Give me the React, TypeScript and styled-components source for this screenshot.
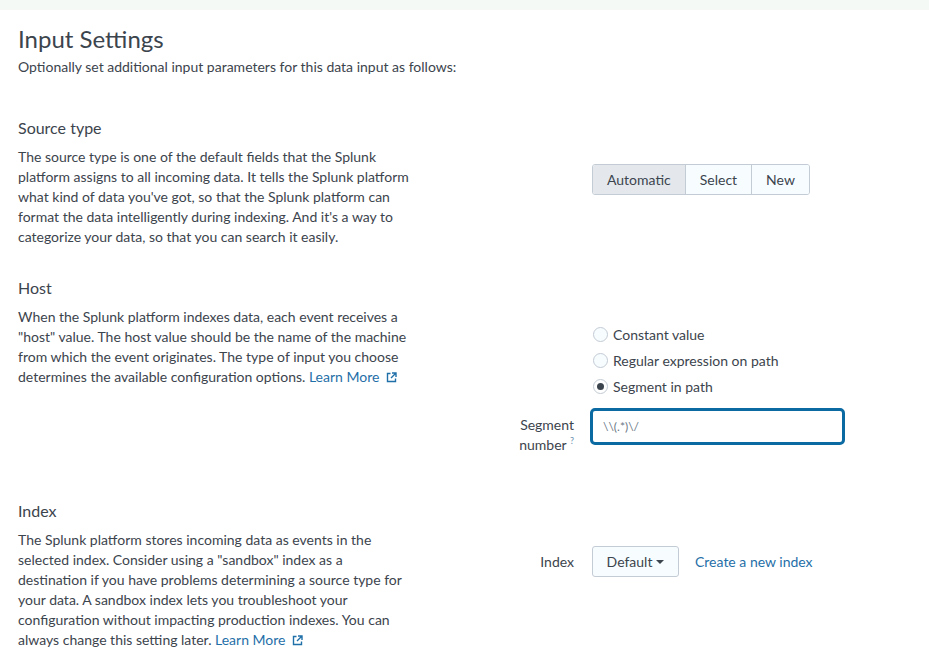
import React from "react";
import styled, { createGlobalStyle } from "styled-components";

const GlobalStyle = createGlobalStyle`
  html, body {
    margin: 0;
    padding: 0;
    background: #fff;
  }
  body {
    font-family: Lato, "Open Sans", sans-serif;
    color: #3c444d;
  }
`;

function ExternalIcon() {
  return (
    <svg width="11" height="11" viewBox="0 0 11 11" fill="none">
      <path d="M4.5 1.5H1.5v8h8v-3" stroke="#1f6fa8" strokeWidth="1.4" />
      <path d="M6 1h4v4M10 1L5 6" stroke="#1f6fa8" strokeWidth="1.4" />
    </svg>
  );
}

function App() {
  return (
    <Page>
      <GlobalStyle />
      <TopStrip />
      <Content>
        <Title>Input Settings</Title>
        <Subtitle>
          Optionally set additional input parameters for this data input as
          follows:
        </Subtitle>

        <Section>
          <Info>
            <Heading>Source type</Heading>
            <Text>
              The source type is one of the default fields that the Splunk
              platform assigns to all incoming data. It tells the Splunk
              platform what kind of data you've got, so that the Splunk
              platform can format the data intelligently during indexing. And
              it's a way to categorize your data, so that you can search it
              easily.
            </Text>
          </Info>
          <Controls $top={46}>
            <ControlRow>
              <span />
              <BtnGroup>
                <GroupBtn $active>Automatic</GroupBtn>
                <GroupBtn>Select</GroupBtn>
                <GroupBtn>New</GroupBtn>
              </BtnGroup>
            </ControlRow>
          </Controls>
        </Section>

        <Section>
          <Info>
            <Heading>Host</Heading>
            <Text>
              When the Splunk platform indexes data, each event receives a
              "host" value. The host value should be the name of the machine
              from which the event originates. The type of input you choose
              determines the available configuration options.{" "}
              <Link>
                Learn More <ExternalIcon />
              </Link>
            </Text>
          </Info>
          <Controls $top={43}>
            <ControlRow>
              <span />
              <RadioList>
                <RadioRow>
                  <Radio />
                  Constant value
                </RadioRow>
                <RadioRow>
                  <Radio />
                  Regular expression on path
                </RadioRow>
                <RadioRow>
                  <Radio $checked />
                  Segment in path
                </RadioRow>
              </RadioList>
            </ControlRow>
            <ControlRow $gap={9} $bottom={15}>
              <FieldLabel>
                Segment
                <br />
                number <Help>?</Help>
              </FieldLabel>
              <TextInput defaultValue={"\\\\(.*)\\/"} />
            </ControlRow>
          </Controls>
        </Section>

        <Section>
          <Info>
            <Heading>Index</Heading>
            <Text>
              The Splunk platform stores incoming data as events in the
              selected index. Consider using a "sandbox" index as a
              destination if you have problems determining a source type for
              your data. A sandbox index lets you troubleshoot your
              configuration without impacting production indexes. You can
              always change this setting later.{" "}
              <Link>
                Learn More <ExternalIcon />
              </Link>
            </Text>
          </Info>
          <Controls $top={45}>
            <ControlRow $center>
              <FieldLabel $center>Index</FieldLabel>
              <Inline>
                <Dropdown>
                  Default <Caret />
                </Dropdown>
                <Link>Create a new index</Link>
              </Inline>
            </ControlRow>
          </Controls>
        </Section>
      </Content>
    </Page>
  );
}

export default App;

const Page = styled.div`
  width: 929px;
  min-height: 671px;
  background: #fff;
`;

const TopStrip = styled.div`
  height: 10px;
  background: #f5f9f6;
`;

const Content = styled.div`
  padding: 0 18px;
`;

const Title = styled.h1`
  margin: 14px 0 0;
  font-size: 24px;
  line-height: 30px;
  font-weight: 400;
  color: #3c444d;
`;

const Subtitle = styled.p`
  margin: 3px 0 0;
  font-size: 14px;
  line-height: 20px;
`;

const Section = styled.div`
  display: grid;
  grid-template-columns: 392px 1fr;
  margin-top: 41px;

  & + & {
    margin-top: 31px;
  }
`;

const Info = styled.div``;

const Heading = styled.h2`
  margin: 0;
  font-size: 16px;
  line-height: 20px;
  font-weight: 400;
  color: #3c444d;
`;

const Text = styled.p`
  margin: 9px 0 0;
  font-size: 14px;
  line-height: 20px;
`;

const Link = styled.a`
  color: #1f6fa8;
  cursor: pointer;

  svg {
    margin-left: 3px;
    vertical-align: -1px;
  }
`;

const Controls = styled.div<{ $top: number }>`
  padding-top: ${(p) => p.$top}px;
`;

const ControlRow = styled.div<{
  $gap?: number;
  $bottom?: number;
  $center?: boolean;
}>`
  display: grid;
  grid-template-columns: 164px 1fr;
  column-gap: 18px;
  align-items: ${(p) => (p.$center ? "center" : "start")};
  margin-top: ${(p) => p.$gap ?? 0}px;
  margin-bottom: ${(p) => p.$bottom ?? 0}px;
`;

const BtnGroup = styled.div`
  display: inline-flex;
  border: 1px solid #c3cbd4;
  border-radius: 3px;
  overflow: hidden;
  width: max-content;
`;

const GroupBtn = styled.button<{ $active?: boolean }>`
  font-family: inherit;
  font-size: 14px;
  color: #3c444d;
  height: 29px;
  padding: 0 14px;
  border: none;
  background: ${(p) => (p.$active ? "#e4e8ed" : "#f7fdff")};
  cursor: pointer;

  & + & {
    border-left: 1px solid #c3cbd4;
  }
`;

const RadioList = styled.div`
  display: flex;
  flex-direction: column;
`;

const RadioRow = styled.label`
  display: flex;
  align-items: center;
  gap: 5px;
  height: 26px;
  font-size: 14px;
  margin-left: 1px;
`;

const Radio = styled.span<{ $checked?: boolean }>`
  position: relative;
  width: 13px;
  height: 13px;
  border-radius: 50%;
  border: 1px solid #c3cbd4;
  background: ${(p) => (p.$checked ? "#fff" : "#f7fdff")};

  &::after {
    content: "";
    display: ${(p) => (p.$checked ? "block" : "none")};
    position: absolute;
    left: 3px;
    top: 3px;
    width: 7px;
    height: 7px;
    border-radius: 50%;
    background: #3c444d;
  }
`;

const FieldLabel = styled.div<{ $center?: boolean }>`
  text-align: right;
  font-size: 14px;
  line-height: 20px;
  padding-top: ${(p) => (p.$center ? 0 : 7)}px;
`;

const Help = styled.sup`
  color: #6b8fb0;
  font-size: 9px;
  line-height: 0;
`;

const TextInput = styled.input`
  box-sizing: border-box;
  width: 255px;
  height: 37px;
  margin-left: -2px;
  padding: 0 10px;
  border: 3px solid #0b6aa2;
  border-radius: 5px;
  font-family: inherit;
  font-size: 12px;
  color: #6b7785;
  outline: none;
`;

const Inline = styled.div`
  display: flex;
  align-items: center;
  gap: 16px;
  font-size: 14px;
`;

const Dropdown = styled.button`
  display: inline-flex;
  align-items: center;
  justify-content: center;
  gap: 4px;
  width: 87px;
  height: 31px;
  border: 1px solid #c3cbd4;
  border-radius: 3px;
  background: #f7fdff;
  font-family: inherit;
  font-size: 14px;
  color: #3c444d;
  cursor: pointer;
`;

const Caret = styled.span`
  width: 0;
  height: 0;
  border-left: 4px solid transparent;
  border-right: 4px solid transparent;
  border-top: 4px solid #3c444d;
`;
